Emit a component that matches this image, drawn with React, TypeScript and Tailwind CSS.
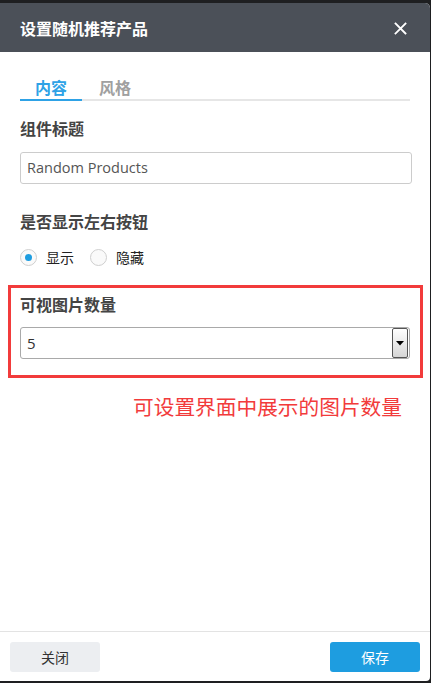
import React from 'react';

const cjk = { fontFamily: '"Noto Sans CJK SC", "Noto Sans", sans-serif' };

const Radio: React.FC<{ checked?: boolean; label: string }> = ({ checked, label }) => (
  <label className="flex items-center gap-[9px]">
    <span className="flex h-[17px] w-[17px] items-center justify-center rounded-full border border-[#cfcfcf] bg-[#fafafa]">
      {checked && <span className="h-[7px] w-[7px] rounded-full bg-[#1e9de0]" />}
    </span>
    <span className="text-[14px] leading-5 text-[#222]">{label}</span>
  </label>
);

export default function App() {
  return (
    <div className="min-h-screen w-full bg-[#1e1f21] pt-[3px]" style={cjk}>
      <div className="flex h-[678px] w-[430px] flex-col overflow-hidden rounded-tr-[5px] rounded-br-[4px] bg-white">
        <header className="flex h-[49px] items-center justify-between bg-[#4b5058] pl-5 pr-[23px]">
          <h1 className="text-[16px] font-bold leading-6 text-white">设置随机推荐产品</h1>
          <svg width="13" height="13" viewBox="0 0 13 13" className="mt-[1px]">
            <path d="M1.5 1.5 L11.5 11.5 M11.5 1.5 L1.5 11.5" stroke="#fff" strokeWidth="1.8" strokeLinecap="square" />
          </svg>
        </header>

        <main className="flex-1 pl-5 pr-[17px] pt-[23px]">
          <div className="flex w-[390px] border-b-2 border-[#e6e6e6]">
            <div className="-mb-[2px] w-[62px] border-b-2 border-[#2ea2e6] text-center text-[16px] font-bold leading-6 text-[#2ea2e6]">
              内容
            </div>
            <div className="w-[66px] text-center text-[16px] font-bold leading-6 text-[#a0a0a0]">风格</div>
          </div>

          <div className="mt-[15px] text-[16px] font-bold leading-6 text-[#444]">组件标题</div>
          <div className="mt-[12px] flex h-[32px] w-[392px] items-center rounded-[3px] border border-[#cccccc] px-[6px]">
            <span className="text-[14.5px] text-[#555]" style={{ fontFamily: '"Open Sans", "Noto Sans", sans-serif' }}>
              Random Products
            </span>
          </div>

          <div className="mt-[25px] text-[16px] font-bold leading-6 text-[#444]">是否显示左右按钮</div>
          <div className="mt-[14px] flex items-center gap-[16px]">
            <Radio checked label="显示" />
            <Radio label="隐藏" />
          </div>

          <div className="-ml-[12px] mt-[18px] w-[415px] border-[3px] border-[#f23b3b] pb-[16px] pl-[9px] pt-[4px]">
            <div className="text-[16px] font-bold leading-6 text-[#444]">可视图片数量</div>
            <div className="mt-[11px] flex h-[32px] w-[390px] items-center justify-between rounded-[3px] border border-[#a9a9a9] pl-[6px] pr-[1px]">
              <span className="text-[15px] text-[#333]" style={{ fontFamily: '"Open Sans", "Noto Sans", sans-serif' }}>
                5
              </span>
              <span className="flex h-[30px] w-[16px] items-center justify-center rounded-[2px] border border-[#555] bg-gradient-to-b from-white to-[#d6d6d6]">
                <svg width="8" height="5" viewBox="0 0 8 5">
                  <path d="M0 0 H8 L4 4.5 Z" fill="#000" />
                </svg>
              </span>
            </div>
          </div>

          <div className="mt-[14px] pl-[113px] text-[20.7px] leading-[28px] text-[#f23b3b]">可设置界面中展示的图片数量</div>
        </main>

        <footer className="flex items-center justify-between border-t border-[#e3e3e3] px-[10px] pb-[9px] pt-[10px]">
          <button className="h-[30px] w-[90px] rounded-[3px] bg-[#eceef1] text-[14px] text-[#333]">关闭</button>
          <button className="h-[30px] w-[90px] rounded-[3px] bg-[#1e9de0] text-[14px] text-white">保存</button>
        </footer>
      </div>
    </div>
  );
}
